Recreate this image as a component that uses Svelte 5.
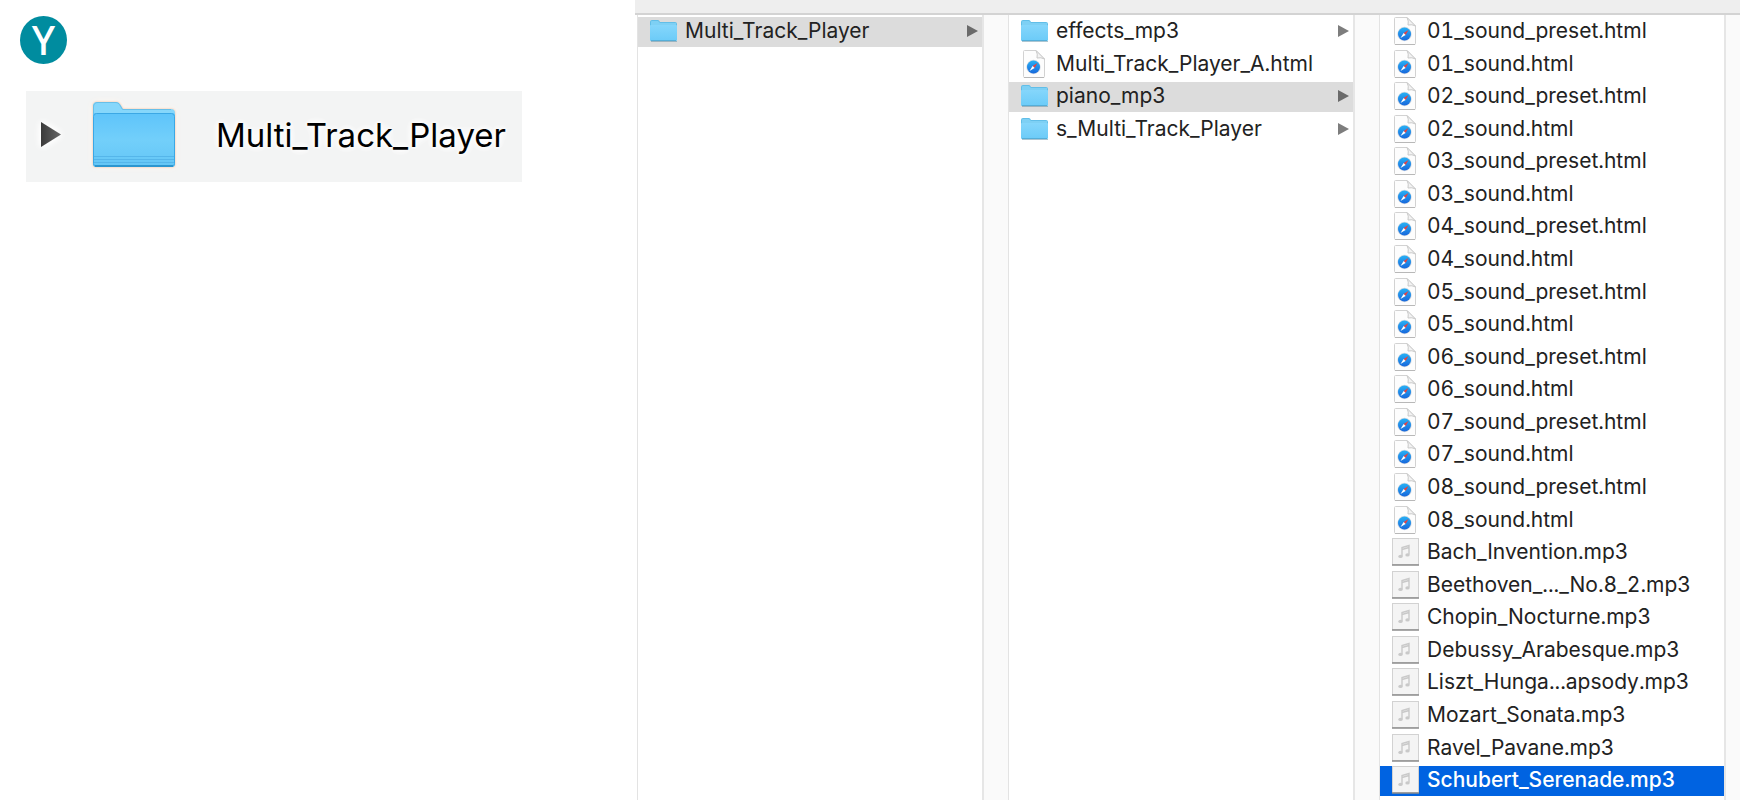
<script>
	const numbers = ['01', '02', '03', '04', '05', '06', '07', '08'];

	const rootItems = [{ name: 'Multi_Track_Player', type: 'folder' }];

	const playerItems = [
		{ name: 'effects_mp3', type: 'folder' },
		{ name: 'Multi_Track_Player_A.html', type: 'html' },
		{ name: 'piano_mp3', type: 'folder' },
		{ name: 's_Multi_Track_Player', type: 'folder' }
	];

	const songs = [
		'Bach_Invention.mp3',
		'Beethoven_..._No.8_2.mp3',
		'Chopin_Nocturne.mp3',
		'Debussy_Arabesque.mp3',
		'Liszt_Hunga...apsody.mp3',
		'Mozart_Sonata.mp3',
		'Ravel_Pavane.mp3',
		'Schubert_Serenade.mp3'
	];

	const pianoItems = [
		...numbers.flatMap((n) => [
			{ name: n + '_sound_preset.html', type: 'html' },
			{ name: n + '_sound.html', type: 'html' }
		]),
		...songs.map((name) => ({ name, type: 'mp3' }))
	];

	const columns = [rootItems, playerItems, pianoItems];

	// selected row in each column
	let selected = $state([0, 2, 23]);
	let active = $state(2);

	function select(col, row) {
		selected[col] = row;
		active = col;
	}
</script>

<svg class="defs" aria-hidden="true">
	<defs>
		<linearGradient id="front" x1="0" y1="0" x2="0" y2="1">
			<stop offset="0" stop-color="#5ec4fa" />
			<stop offset="0.5" stop-color="#72cffa" />
			<stop offset="1" stop-color="#64c6f6" />
		</linearGradient>
		<linearGradient id="frontSmall" x1="0" y1="0" x2="0" y2="1">
			<stop offset="0" stop-color="#85d6fb" />
			<stop offset="1" stop-color="#6bcbf8" />
		</linearGradient>
		<linearGradient id="compass" x1="0" y1="0" x2="0" y2="1">
			<stop offset="0" stop-color="#27b0f5" />
			<stop offset="1" stop-color="#1768dc" />
		</linearGradient>
		<linearGradient id="arrow" x1="0" y1="0" x2="1" y2="0">
			<stop offset="0" stop-color="#3a3a3a" />
			<stop offset="1" stop-color="#686868" />
		</linearGradient>
	</defs>
</svg>

<main>
	<section class="intro">
		<span class="badge">Y</span>
		<button class="folder-row">
			<svg class="disclosure" viewBox="0 0 20 25"><path d="M0 0L20 12.5L0 25Z" fill="url(#arrow)" /></svg>
			<svg class="big-folder" viewBox="0 0 82 66">
				<path d="M0 14V4Q0 0 4 0H23Q26 0 27 2L30 7H78Q82 7 82 11V20H0Z" fill="#86d7fb" />
				<path d="M0.5 13V5Q0.5 0.5 5 0.5H23Q25 0.5 26.5 2.5L29.5 7.5H78" fill="none" stroke="#68bfe8" />
				<rect y="11" width="82" height="54" rx="3" fill="url(#front)" />
				<rect x="0.5" y="11.5" width="81" height="53" rx="3" fill="none" stroke="#3ba8e5" />
				<path d="M1 54.5H81M1 57.5H81M1 60.5H81" stroke="#55b6ea" />
				<path d="M2 64H80" stroke="#2c96cf" stroke-width="2" />
			</svg>
			<span>Multi_Track_Player</span>
		</button>
	</section>

	<section class="finder">
		<div class="toolbar"></div>
		<div class="columns">
			{#each columns as items, col}
				<div class="column">
					<ul>
						{#each items as item, row}
							<li>
								<button
									class="item"
									class:selected={selected[col] === row}
									class:active={selected[col] === row && active === col}
									onclick={() => select(col, row)}
								>
									{#if item.type === 'folder'}
										<svg class="icon" viewBox="0 -1 28 28">
											<path d="M1 23H27V24H1Z" fill="#5a8ba3" opacity="0.5" />
											<path d="M0 22V4Q0 2 2 2H8Q9 2 10 4H25Q27 4 27 6V22Z" fill="#61bee8" />
											<path d="M1 7V4Q1 3 2 3H8L10 5H26V7Z" fill="#7ed0f4" />
											<rect y="7" width="27" height="16" rx="1" fill="url(#frontSmall)" />
											<path d="M1 22.5H26" stroke="#55aed8" />
										</svg>
									{:else if item.type === 'html'}
										<svg class="icon" viewBox="0 0 28 28">
											<path d="M2.5 1.5Q2.5 0.5 3.5 0.5H15L23.5 9V26.5Q23.5 27.5 22.5 27.5H3.5Q2.5 27.5 2.5 26.5Z" fill="#fdfdfd" stroke="#d2d2d2" />
											<path d="M3 27.5H23" stroke="#b8b8b8" />
											<path d="M15 0.5Q17 4 16 8Q20 7 23.5 9Z" fill="#f3f3f3" stroke="#c9c9c9" />
											<circle cx="12.5" cy="17" r="7.2" fill="#d3dae2" />
											<circle cx="12.5" cy="17" r="6.5" fill="url(#compass)" />
											<path d="M16.5 13L13.6 18L11.6 16Z" fill="#e8413f" />
											<path d="M8.5 21L11.6 16L13.6 18Z" fill="#fff" />
										</svg>
									{:else}
										<svg class="icon" viewBox="0 0 28 28">
											<rect x="0.5" y="0.5" width="26" height="26" fill="#f4f4f4" stroke="#d2d2d2" />
											<path d="M0 27H27" stroke="#8c8c8c" stroke-width="1.5" />
											<path d="M10 18V9.5L17 7.5V16.5M10 11.5L17 9.5" fill="none" stroke="#c9c9c9" stroke-width="1.4" />
											<ellipse cx="8.5" cy="18.4" rx="2.2" ry="1.7" fill="#c9c9c9" />
											<ellipse cx="15.5" cy="16.9" rx="2.2" ry="1.7" fill="#c9c9c9" />
										</svg>
									{/if}
									<span class="name">{item.name}</span>
									{#if item.type === 'folder'}
										<svg class="more" viewBox="0 0 11 12"><path d="M0 0L11 6L0 12Z" fill="currentColor" /></svg>
									{/if}
								</button>
							</li>
						{/each}
					</ul>
					<div class="scrollbar"></div>
				</div>
			{/each}
		</div>
	</section>
</main>

<style>
	:global(body) {
		background: #fff;
		font-family: Inter, 'Liberation Sans', sans-serif;
	}
	.defs {
		position: absolute;
		width: 0;
		height: 0;
	}
	main {
		display: grid;
		grid-template-columns: 635fr 1105fr;
		min-height: 100vh;
		overflow: hidden;
	}
	button {
		box-sizing: border-box;
		border: 0;
		margin: 0;
		font-family: inherit;
		text-align: left;
		cursor: default;
	}
	.intro {
		display: flex;
		flex-direction: column;
		align-items: flex-start;
		padding: 16px 20px;
		gap: 27px;
	}
	.badge {
		width: 47px;
		height: 48px;
		border-radius: 50%;
		background: #008c9f;
		color: #fff;
		font: 500 40px/48px 'Noto Sans', sans-serif;
		text-align: center;
	}
	.folder-row {
		display: flex;
		align-items: center;
		height: 91px;
		margin-left: 6px;
		padding: 0 16px 4px 15px;
		background: #f3f4f4;
		color: #000;
		font-size: 33px;
		white-space: nowrap;
	}
	.disclosure {
		width: 20px;
		height: 25px;
		margin-right: 31px;
		filter: drop-shadow(0 0 3px #fff) drop-shadow(0 0 3px #fff);
	}
	.big-folder {
		width: 84px;
		height: 66px;
		margin-right: 40px;
		filter: drop-shadow(0 0 1px #f3bfa0) drop-shadow(0 0 3px #fff6ee);
	}
	.folder-row span {
		text-shadow: 0 0 4px #fff, 0 0 6px #fff, 0 0 8px #fff, 0 0 10px #fff;
	}
	.finder {
		display: flex;
		flex-direction: column;
		min-width: 0;
		overflow: hidden;
	}
	.toolbar {
		height: 13px;
		background: #eee;
		border-bottom: 2px solid #d3d3d3;
	}
	.columns {
		flex: 1;
		display: flex;
		padding-left: 2px;
	}
	.column {
		flex: 0 0 371px;
		box-sizing: border-box;
		display: flex;
		border-left: 1px solid #e3e3e3;
	}
	ul {
		flex: 1;
		min-width: 0;
		margin: 0;
		padding: 2px 0 0;
		list-style: none;
		display: grid;
		grid-auto-rows: 33px 32px 33px 32px 33px 32px 33px;
		align-content: start;
	}
	.item {
		display: flex;
		align-items: center;
		gap: 7px;
		width: 100%;
		height: 30px;
		padding: 0 4px 2px 12px;
		background: none;
		color: #222;
		font-size: 21px;
		font-variant-numeric: tabular-nums;
		white-space: nowrap;
	}
	.selected {
		background: #dcdcdc;
	}
	.active {
		background: #0063e1;
		color: #fff;
		font-weight: 500;
	}
	.icon {
		flex: none;
		width: 28px;
		height: 28px;
	}
	.name {
		flex: 1;
		padding-bottom: 1px;
	}
	.more {
		width: 11px;
		height: 12px;
		color: #7d7d7d;
	}
	.selected .more {
		color: #6a6a6a;
	}
	.active .more {
		color: #fff;
	}
	.scrollbar {
		width: 26px;
		background: #fafafa;
		border-left: 2px solid #e6e6e6;
		box-sizing: border-box;
	}
</style>
